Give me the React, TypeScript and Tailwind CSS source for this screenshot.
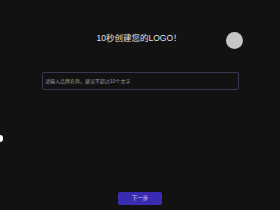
import React from 'react';

const App: React.FC = () => {
  return (
    <div
      className="relative w-[280px] h-[210px] overflow-hidden bg-[#121212] flex flex-col items-center"
      style={{ fontFamily: '"Liberation Sans", "Noto Sans CJK SC", sans-serif' }}
    >
      {/* decorative dots */}
      <div className="absolute left-[226px] top-[32px] w-[17px] h-[17px] rounded-full bg-[#c6c6c6]" />
      <div className="absolute left-[-3px] top-[135px] w-[6px] h-[7px] rounded-full bg-white" />

      <h1 className="mt-[32px] mr-[2px] h-[13px] text-[8.5px] leading-[13px] text-[#e2e2e2]">
        10秒创建您的LOGO！
      </h1>

      <div className="mt-[27px] w-[197px] h-[18px] ml-[1px] border border-[#3b3652] rounded-[2px] flex items-center px-[2px]">
        <span className="text-[5px] text-[#9a9a9a] leading-none">
          请输入品牌名称，建议不超过10个文字
        </span>
      </div>

      <div className="flex-1" />

      <button className="mb-[5px] w-[44px] h-[13px] rounded-[2px] bg-[#3a2cb0] text-[5.5px] text-[#cfc9f2] leading-none">
        下一步
      </button>
    </div>
  );
};

export default App;
